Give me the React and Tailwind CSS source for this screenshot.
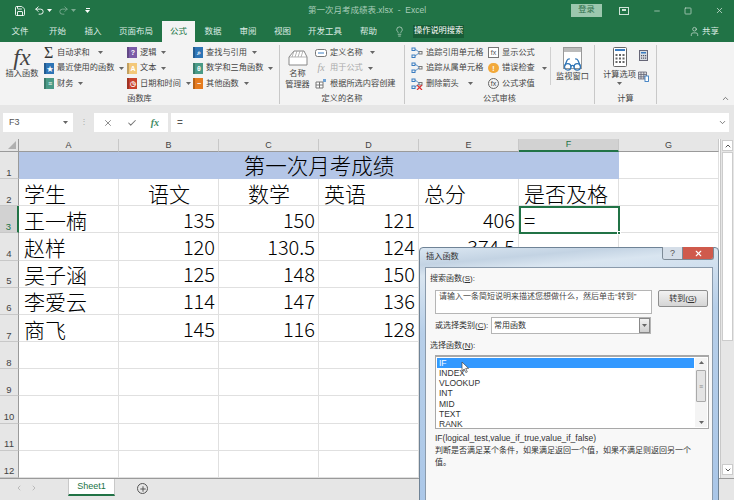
import { Save, Undo2, Redo2, Lightbulb, User, Minus, Square, X, Check, ChevronDown, ChevronUp, ChevronLeft, ChevronRight, Plus, Glasses } from 'lucide-react';

const cjk = 'font-["Liberation_Sans","Noto_Sans_CJK_SC",sans-serif]';

const tabs = [
  ['文件', 'w-[38px]'], ['开始', 'w-[37px]'], ['插入', 'w-[34px]'], ['页面布局', 'w-[52px]'], ['公式', 'w-[33px]'],
  ['数据', 'w-[36px]'], ['审阅', 'w-[34px]'], ['视图', 'w-[35px]'], ['开发工具', 'w-[50px]'], ['帮助', 'w-[37px]'],
];

const cols = ['A', 'B', 'C', 'D', 'E', 'F', 'G'];

const rows = [
  { n: 2, cells: ['学生', '语文', '数学', '英语', '总分', '是否及格'], head: true },
  { n: 3, cells: ['王一楠', 135, 150, 121, 406, '='] },
  { n: 4, cells: ['赵样', 120, 130.5, 124, 374.5, ''] },
  { n: 5, cells: ['吴子涵', 125, 148, 150, '', ''] },
  { n: 6, cells: ['李爱云', 114, 147, 136, '', ''] },
  { n: 7, cells: ['商飞', 145, 116, 128, '', ''] },
];

const headIndent = ['pl-[5px]', 'pl-[29px]', 'pl-[29px]', 'pl-[5px]', 'pl-[5px]', 'pl-[5px]'];

function Caret({ className = '', fill = '#666' }) {
  return (
    <svg width="5" height="3" viewBox="0 0 5 3" className={`shrink-0 ${className}`}>
      <path d="M0 0h5L2.5 3z" fill={fill} />
    </svg>
  );
}

function Book({ color, children }) {
  return (
    <span className="w-[10px] h-[11px] shrink-0 flex items-center justify-center text-white text-[7px] font-bold leading-none border-l-2 border-black/20" style={{ backgroundColor: color }}>
      {children}
    </span>
  );
}

function Cmd({ icon, label, caret, gray, gap = 'ml-[2px]' }) {
  return (
    <div className={`h-[15.5px] flex items-center gap-[3px] whitespace-nowrap ${gray ? 'text-[#aaa]' : 'text-[#444]'}`}>
      {icon}
      <span>{label}</span>
      {caret && <Caret className={gap} />}
    </div>
  );
}

function Group({ label, className, children }) {
  return (
    <div className={`relative h-[59px] border-r border-[#c8c8c8] shrink-0 ${className}`}>
      <div className="h-[47px] flex items-start">{children}</div>
      <div className="absolute left-0 right-0 bottom-[1px] text-center text-[#444]">{label}</div>
    </div>
  );
}

function TraceIcon({ color = '#3a7cc0', x }) {
  return (
    <svg width="12" height="12" viewBox="0 0 12 12" className="shrink-0">
      <rect x="1" y="1" width="3" height="2.5" fill="none" stroke={color} />
      <rect x="1" y="8" width="3" height="2.5" fill="none" stroke={color} />
      <rect x="8" y="4.5" width="3" height="2.5" fill="none" stroke="#777" />
      <path d="M4 2l4 3M4 9l4-3" stroke={color} strokeWidth="0.8" />
      {x && <path d="M6 7l5 5M11 7l-5 5" stroke="#d33" strokeWidth="1.2" />}
    </svg>
  );
}

function CalcLarge() {
  return (
    <svg width="14" height="20" viewBox="0 0 14 20" className="mt-[2px]">
      <rect x="0.5" y="0.5" width="13" height="19" rx="1" fill="#fff" stroke="#666" />
      <rect x="2" y="2" width="10" height="2" fill="#3a7cc0" />
      <path d="M2.5 7h2v2h-2zM6 7h2v2H6zM9.5 7h2v2h-2zM2.5 10.5h2v2h-2zM6 10.5h2v2H6zM9.5 10.5h2v2h-2zM2.5 14h2v2h-2zM6 14h2v2H6zM9.5 14h2v2h-2z" fill="#666" />
    </svg>
  );
}

function CalcSmall() {
  return (
    <svg width="9" height="11" viewBox="0 0 9 11" className="ml-px shrink-0">
      <rect x="0.5" y="0.5" width="8" height="10" fill="#d8dde2" stroke="#667" />
      <rect x="2" y="2" width="5" height="1.5" fill="#3a7cc0" />
      <path d="M2 5h1.2v1.2H2zM4 5h1.2v1.2H4zM6 5h1.2v1.2H6zM2 7.5h1.2v1.2H2zM4 7.5h1.2v1.2H4zM6 7.5h1.2v1.2H6z" fill="#556" />
    </svg>
  );
}

function CalcSheet() {
  return (
    <svg width="11" height="11" viewBox="0 0 11 11" className="shrink-0">
      <path d="M0.5 1h8v7h-8zM0.5 3.5h8M0.5 5.8h8M3 1v7M5.8 1v7" fill="#ddd" stroke="#667" strokeWidth="0.8" />
      <rect x="7" y="5" width="3.5" height="5.5" fill="#fff" stroke="#3a7cc0" strokeWidth="0.9" />
    </svg>
  );
}

export default function App() {
  return (
    <div className={`w-[734px] h-[500px] overflow-hidden relative bg-white text-[8.2px] leading-none ${cjk}`}>
      {/* title bar */}
      <div className="h-[21px] bg-[#217346] flex items-center text-white relative">
        <div className="flex items-center pl-[14px]">
          <Save size={12} strokeWidth={1.8} />
          <div className="flex items-center gap-[2px] ml-[8px]">
            <Undo2 size={11} strokeWidth={2} />
            <Caret fill="#fff" />
          </div>
          <div className="flex items-center gap-[2px] ml-[6px] opacity-40">
            <Redo2 size={11} strokeWidth={2} />
            <Caret fill="#fff" />
          </div>
          <div className="w-[5px] flex flex-col gap-[1px] items-center ml-[9px]">
            <span className="w-[4px] h-px bg-white" />
            <Caret fill="#fff" />
          </div>
        </div>
        <div className="absolute left-[308px] text-[8.5px] text-[#a9cdb9] whitespace-nowrap">第一次月考成绩表.xlsx&nbsp;&nbsp;-&nbsp;&nbsp;Excel</div>
        <div className="ml-auto flex items-center text-[#cfe3d8]">
          <div className="w-[31px] h-[13px] mr-[17px] bg-[#9cc7ae] text-[#2f6f4c] flex items-center justify-center">登录</div>
          <svg width="10" height="8" viewBox="0 0 10 8" className="mr-[24px]">
            <rect x="0.5" y="0.5" width="9" height="7" fill="none" stroke="currentColor" />
            <rect x="3" y="2" width="4" height="2" fill="currentColor" />
          </svg>
          <Minus size={8} className="mr-[23px]" />
          <Square size={8} className="mr-[23px]" />
          <X size={9} className="mr-[10px]" />
        </div>
      </div>

      {/* tab row */}
      <div className="h-[21px] bg-[#217346] flex items-stretch text-[#dcebe3] text-[8.5px]">
        <div className="flex items-stretch pl-[1px]">
          {tabs.map(([t, w]) => (
            <div key={t} className={`${w} flex items-center justify-center ${t === '公式' ? 'bg-[#f3f3f3] text-[#217346]' : ''}`}>{t}</div>
          ))}
        </div>
        <div className="flex items-center ml-[7px] gap-[8px]">
          <Lightbulb size={11} strokeWidth={1.4} />
          <span className="bg-[#185c37] text-white px-px py-[2px] text-[8.2px]">操作说明搜索</span>
        </div>
        <div className="ml-auto mr-[15px] flex items-center gap-[2px]">
          <User size={11} strokeWidth={1.4} />
          <span>共享</span>
        </div>
      </div>

      {/* ribbon */}
      <div className="h-[63px] bg-[#f3f3f3] flex items-start pt-[3px] relative">
        <Group label="函数库" className="w-[280px]">
          <div className="w-[44px] flex flex-col items-center text-[#444]">
            <span className="h-[25px] text-[#444] italic text-[24px] font-['Liberation_Serif',serif]">fx</span>
            <span>插入函数</span>
          </div>
          <div className="w-[83px]">
            <Cmd icon={<span className="w-[10px] text-[16px] text-[#333] font-['Liberation_Serif',serif] leading-[11px]">Σ</span>} label="自动求和" caret gap="ml-[5px]" />
            <Cmd icon={<Book color="#2e74b5">★</Book>} label="最近使用的函数" caret />
            <Cmd icon={<Book color="#4a9a86">≡</Book>} label="财务" caret />
          </div>
          <div className="w-[66px]">
            <Cmd icon={<Book color="#7b5ca8">?</Book>} label="逻辑" caret />
            <Cmd icon={<Book color="#f3c87a">A</Book>} label="文本" caret />
            <Cmd icon={<Book color="#c8412c">◷</Book>} label="日期和时间" caret />
          </div>
          <div>
            <Cmd icon={<Book color="#2e74b5">⌕</Book>} label="查找与引用" caret />
            <Cmd icon={<Book color="#4a9a86">θ</Book>} label="数学和三角函数" caret />
            <Cmd icon={<Book color="#e57b1f">−</Book>} label="其他函数" caret />
          </div>
        </Group>

        <Group label="定义的名称" className="w-[125px]">
          <div className="w-[35px] flex flex-col items-center text-[#444] leading-[10.5px] pt-[4px]">
            <svg width="20" height="18" viewBox="0 0 20 18">
              <path d="M1 8l5-6h10l3 6v8H1z" fill="#fff" stroke="#888" />
              <path d="M1 8h18M6 2l-2 6M9 2l-2 6M12 2l-2 6M15 2l-2 6" stroke="#999" strokeWidth="0.7" fill="none" />
            </svg>
            <span className="mt-[2px]">名称</span>
            <span>管理器</span>
          </div>
          <div>
            <Cmd icon={<svg width="12" height="8" viewBox="0 0 12 8" className="shrink-0"><rect x="0.5" y="0.5" width="11" height="7" rx="2" fill="#fff" stroke="#777" /><path d="M3 4h6" stroke="#3a7cc0" /></svg>} label="定义名称" caret gap="ml-[4px]" />
            <Cmd gray icon={<span className="w-[12px] text-center italic text-[10px] font-['Liberation_Serif',serif]">fx</span>} label="用于公式" caret />
            <Cmd icon={<svg width="12" height="11" viewBox="0 0 12 11" className="shrink-0"><path d="M1 4h7v6H1zM1 7h7M4.5 4v6" fill="#fff" stroke="#777" /><path d="M8 1h3v3H8z" fill="#6fa3d6" /></svg>} label="根据所选内容创建" />
          </div>
        </Group>

        <Group label="公式审核" className="w-[190px]">
          <div className="w-[83px] pl-[6px]">
            <Cmd icon={<TraceIcon />} label="追踪引用单元格" />
            <Cmd icon={<TraceIcon />} label="追踪从属单元格" />
            <Cmd icon={<TraceIcon x />} label="删除箭头" caret gap="ml-[6px]" />
          </div>
          <div className="w-[62px]">
            <Cmd icon={<span className="w-[11px] h-[11px] border border-[#777] bg-white text-[7px] text-[#555] flex items-center justify-center shrink-0">fx</span>} label="显示公式" />
            <Cmd icon={<span className="w-[11px] h-[10px] rounded-full bg-[#f2a93b] text-white text-[7px] font-bold flex items-center justify-center shrink-0">!</span>} label="错误检查" caret gap="ml-[4px]" />
            <Cmd icon={<span className="w-[11px] h-[11px] rounded-full border border-[#666] text-[7px] flex items-center justify-center shrink-0">fx</span>} label="公式求值" />
          </div>
          <div className="w-px h-[38px] bg-[#d0d0d0] mt-[2px]" />
          <div className="flex-1 flex flex-col items-center text-[#444] pt-[2px]">
            <div className="relative w-[19px] h-[22px] border border-[#999] bg-white">
              <div className="h-[4px] bg-[#bbb]" />
              <Glasses size={19} strokeWidth={1.6} className="absolute left-[-1px] top-[7px] text-[#2e74b5]" />
            </div>
            <span className="mt-[4px]">监视窗口</span>
          </div>
        </Group>

        <Group label="计算" className="w-[62px]">
          <div className="w-[43px] pl-[6px] flex flex-col items-center text-[#444]">
            <CalcLarge />
            <span className="mt-[4px] whitespace-nowrap">计算选项</span>
            <Caret className="mt-[3px]" />
          </div>
          <div className="flex flex-col gap-[10px] pt-[5px]">
            <CalcSmall />
            <CalcSheet />
          </div>
        </Group>
        <ChevronUp size={9} strokeWidth={2} className="absolute right-[4px] bottom-[2px] text-[#555]" />
      </div>

      {/* formula bar */}
      <div className="h-[34px] bg-[#e6e6e6] pt-[8px] pl-[3px] pr-[5px] flex items-start text-[#555]">
        <div className="w-[70px] h-[19px] bg-white flex items-center justify-between pl-[6px] pr-[5px]">
          <span className="text-[9px]">F3</span>
          <Caret />
        </div>
        <div className="w-[21px] flex justify-center h-[19px] items-center text-[#aaa] tracking-tight">⋮</div>
        <div className="w-[74px] h-[19px] bg-white flex items-center justify-around px-[2px]">
          <X size={10} className="text-[#777]" />
          <Check size={10} strokeWidth={2.5} className="text-[#777]" />
          <span className="italic font-['Liberation_Serif',serif] text-[10px] font-bold text-[#3d8a63]">fx</span>
        </div>
        <div className="flex-1 ml-[3px] h-[19px] bg-white flex items-center justify-between pl-[6px] pr-[2px]">
          <span className="text-[10px]">=</span>
          <ChevronDown size={9} strokeWidth={2} />
        </div>
      </div>

      {/* sheet and scrollbar */}
      <div className="h-[339px] flex">
        <div className={`w-[720px] relative bg-white grid grid-cols-[19px_repeat(7,100px)] grid-rows-[13px_repeat(12,27.17px)] ${cjk}`}>
          <div className="bg-[#e6e6e6] border-b border-r border-[#9a9a9a] relative">
            <svg width="8" height="8" viewBox="0 0 8 8" className="absolute right-[2px] bottom-[2px]"><path d="M8 0v8H0z" fill="#b0b0b0" /></svg>
          </div>
          {cols.map(c => (
            <div key={c} className={`flex items-center justify-center text-[9px] font-['Liberation_Sans',sans-serif] border-r border-[#c8c8c8] ${c === 'F' ? 'bg-[#d2d2d2] border-b-2 border-b-[#217346] text-[#217346]' : 'bg-[#e6e6e6] border-b border-b-[#9a9a9a] text-[#444]'}`}>{c}</div>
          ))}

          <RowHead n={1} />
          <div className="col-span-6 bg-[#b4c6e7] flex items-center justify-center leading-none pb-[2px] text-[21.5px] font-['Noto_Sans_CJK_SC',sans-serif] font-light text-black">第一次月考成绩</div>
          <Cell />

          {rows.map(r => (
            <Row key={r.n} row={r} />
          ))}

          {[8, 9, 10, 11, 12].map(n => (
            <Row key={n} row={{ n, cells: ['', '', '', '', '', ''] }} />
          ))}

          {/* active cell F3 */}
          <div className="absolute left-[519px] top-[67px] w-[101px] h-[28px] border-2 border-[#217346] pointer-events-none">
            <span className="absolute right-[-3px] bottom-[-3px] w-[4px] h-[4px] bg-[#217346] border border-white" />
          </div>
        </div>

        <div className="flex-1 bg-[#e6e6e6] flex flex-col items-center pt-[1px] border-l border-[#c8c8c8]">
          <div className="w-[11px] h-[11px] bg-white border border-[#ccc] flex items-center justify-center"><ChevronUp size={8} strokeWidth={3} className="text-[#555]" /></div>
          <div className="w-[11px] h-[189px] bg-white border border-[#ccc] mt-[1px]" />
          <div className="w-[11px] h-[11px] bg-white border border-[#ccc] mt-auto mb-[3px] flex items-center justify-center"><ChevronDown size={8} strokeWidth={3} className="text-[#555]" /></div>
        </div>
      </div>

      {/* sheet tabs */}
      <div className="h-[22px] bg-[#e6e6e6] border-t border-[#9a9a9a] flex items-start">
        <div className="w-[68px] pl-[15px] pt-[5px] flex gap-[7px] text-[#bbb]">
          <ChevronLeft size={8} strokeWidth={3} />
          <ChevronRight size={8} strokeWidth={3} />
        </div>
        <div className="w-[47px] h-[17px] bg-white border-x border-[#c8c8c8] border-b-2 border-b-[#217346] flex items-center justify-center text-[#217346] text-[9px] font-['Liberation_Sans',sans-serif]">Sheet1</div>
        <div className="ml-[22px] mt-[4px] w-[11px] h-[11px] rounded-full border border-[#555] flex items-center justify-center">
          <Plus size={8} strokeWidth={3} className="text-[#555]" />
        </div>
      </div>

      {/* insert function dialog */}
      <div className="absolute left-[419px] top-[247px] w-[300px] h-[260px] rounded-t-[4px] border border-[#6f8396] bg-[linear-gradient(175deg,#dbe7f2_0%,#c3d3e3_6%,#d9e5f0_10%,#b7cfe9_30%,#a9c6e8_100%)] px-[5px] pb-[5px] text-[8px]">
        <div className="h-[19px] flex items-center text-[#333] relative">
          <span className="ml-[1px] text-[8.2px]">插入函数</span>
          <div className="absolute right-[-1px] top-[-1px] flex h-[13px] rounded-b-[3px] overflow-hidden border border-t-0 border-[#7d8a96]">
            <div className="w-[19px] bg-[#d5dee8] flex items-center justify-center text-[#555] text-[9px] font-['Liberation_Sans',sans-serif]">?</div>
            <div className="w-[31px] bg-[#cf5a4c] flex items-center justify-center border-l border-[#7d8a96]"><X size={9} strokeWidth={3} className="text-white" /></div>
          </div>
        </div>
        <div className="h-[240px] bg-[#f8f8f8] border border-[#8a9aab] pt-[6px] px-[4px] text-[#333]">
          <div className="flex h-[10px] items-center">搜索函数<span className="font-['Liberation_Sans',sans-serif]">(<u>S</u>):</span></div>
          <div className="flex mt-[6px] ml-[5px]">
            <div className="w-[217px] h-[24px] bg-white border border-[#b5b5b5] px-[3px] py-[2px] text-[#444]">请输入一条简短说明来描述您想做什么，然后单击“转到”</div>
            <div className="ml-[6px] w-[50px] h-[17px] border border-[#8e8e8e] rounded-[2px] bg-gradient-to-b from-[#f2f2f2] to-[#d5d5d5] flex items-center justify-center">转到<span className="font-['Liberation_Sans',sans-serif]">(<u>G</u>)</span></div>
          </div>
          <div className="flex items-center mt-[3px] ml-[5px]">
            <span className="w-[56px] whitespace-nowrap">或选择类别<span className="font-['Liberation_Sans',sans-serif]">(<u>C</u>):</span></span>
            <div className="w-[160px] h-[17px] bg-white border border-[#b5b5b5] flex items-center justify-between pl-[2px]">
              <span>常用函数</span>
              <div className="w-[11px] h-[15px] bg-gradient-to-b from-[#f2f2f2] to-[#cfcfcf] border border-[#888] flex items-center justify-center"><Caret /></div>
            </div>
          </div>
          <div className="mt-[7px] h-[10px] flex items-center">选择函数<span className="font-['Liberation_Sans',sans-serif]">(<u>N</u>):</span></div>
          <div className="mt-[4px] ml-[5px] w-[274px] h-[74px] bg-white border border-[#a8a8a8] border-t-2 flex p-px font-['Liberation_Sans',sans-serif] text-[8.5px]">
            <div className="flex-1 relative">
              {['IF', 'INDEX', 'VLOOKUP', 'INT', 'MID', 'TEXT', 'RANK'].map((f, i) => (
                <div key={f} className={`h-[10.2px] flex items-center pl-[2px] ${i === 0 ? 'bg-[#3399ff] text-white' : ''}`}>{f}</div>
              ))}
              <svg width="9" height="13" viewBox="0 0 9 13" className="absolute left-[24px] top-[3px]">
                <path d="M1 1v9l2.2-2 1.6 3.6 1.5-.7L4.7 7.4H7.6z" fill="#fff" stroke="#444" strokeWidth="0.7" />
              </svg>
            </div>
            <div className="w-[12px] ml-[1px] flex flex-col items-center bg-[#f4f4f4]">
              <Caret className="rotate-180 mt-[3px]" />
              <div className="w-[10px] h-[32px] bg-[#e4e4e4] border border-[#aaa] rounded-[1px] flex items-center justify-center text-[#888] text-[7px] mt-[6px]">≡</div>
              <Caret className="mt-auto mb-[3px]" />
            </div>
          </div>
          <div className="mt-[3px] ml-[5px] h-[12px] flex items-center font-['Liberation_Sans',sans-serif] text-[8.5px]">IF(logical_test,value_if_true,value_if_false)</div>
          <div className="mt-[1px] ml-[5px] w-[265px] leading-[11.5px] text-[#333]">判断是否满足某个条件，如果满足返回一个值，如果不满足则返回另一个值。</div>
        </div>
      </div>
    </div>
  );
}

function RowHead({ n }) {
  const active = n === 3;
  return (
    <div className={`flex items-end justify-center text-[9.5px] pb-[1px] font-['Liberation_Sans',sans-serif] border-b border-b-[#c8c8c8] ${active ? 'bg-[#d2d2d2] border-r-2 border-r-[#217346] text-[#217346]' : 'bg-[#e6e6e6] border-r border-r-[#9a9a9a] text-[#444]'}`}>{n}</div>
  );
}

function Cell({ children, className = '' }) {
  return <div className={`border-r border-b border-[#e0e0e0] flex items-center leading-none whitespace-nowrap overflow-visible text-black font-['Noto_Sans_CJK_SC',sans-serif] font-light ${className}`}>{children}</div>;
}

function Row({ row }) {
  return (
    <>
      <RowHead n={row.n} />
      {row.cells.map((v, i) => {
        const isNum = typeof v === 'number';
        const indent = row.head ? headIndent[i] : 'pl-[5px]';
        return (
          <Cell key={i} className={isNum ? 'justify-end pr-[3px] pt-[1px] text-[20px]' : `${indent} pt-[2px] text-[21px]`}>{v}</Cell>
        );
      })}
      <Cell />
    </>
  );
}
